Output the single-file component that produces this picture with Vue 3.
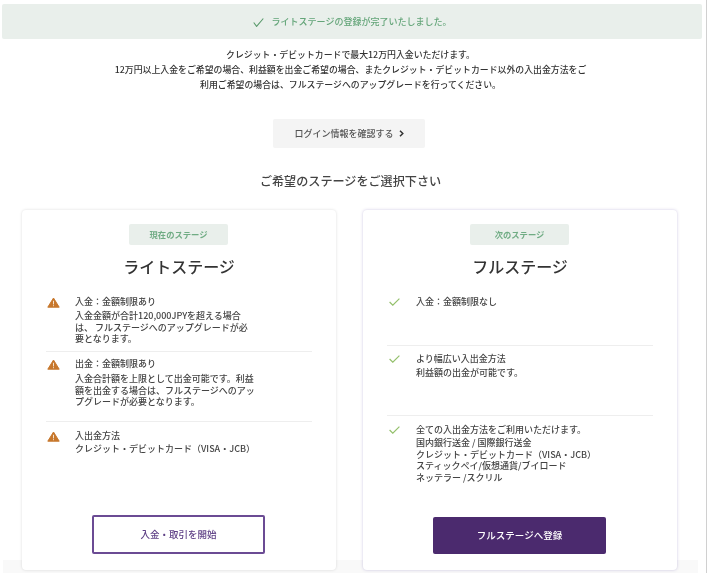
<script setup>
const lite = [
  { head: '入金：金額制限あり', lines: ['入金金額が合計120,000JPYを超える場合', 'は、 フルステージへのアップグレードが必', '要となります。'], h: 56, pad: 0, gap: 2 },
  { head: '出金：金額制限あり', lines: ['入金合計額を上限として出金可能です。利益', '額を出金する場合は、フルステージへのアッ', 'プグレードが必要となります。'], h: 70, pad: 6, gap: 3 },
  { head: '入出金方法', lines: ['クレジット・デビットカード（VISA・JCB）'], h: 60, pad: 8, gap: 1 },
]
const full = [
  { head: '入金：金額制限なし', lines: [], h: 50, pad: 0, gap: 2 },
  { head: 'より幅広い入出金方法', lines: ['利益額の出金が可能です。'], h: 70, pad: 7, gap: 2 },
  { head: '全ての入出金方法をご利用いただけます。', lines: ['国内銀行送金 / 国際銀行送金', 'クレジット・デビットカード（VISA・JCB）', 'スティックペイ/仮想通貨/ブイロード', 'ネッテラー /スクリル'], h: 70, pad: 8, gap: 1 },
]
</script>

<template>
  <div class="page">
    <div class="banner">
      <svg class="banner-check" width="11" height="9" viewBox="0 0 11 9"><path d="M0.7 4.5 L3.6 8.4 L10.3 0.5" fill="none" stroke="#5a9a6c" stroke-width="1.1" /></svg>
      <span>ライトステージの登録が完了いたしました。</span>
    </div>

    <div class="intro">
      <p>クレジット・デビットカードで最大12万円入金いただけます。</p>
      <p>12万円以上入金をご希望の場合、利益額を出金ご希望の場合、またクレジット・デビットカード以外の入出金方法をご</p>
      <p>利用ご希望の場合は、フルステージへのアップグレードを行ってください。</p>
    </div>

    <button class="login-btn">
      ログイン情報を確認する
      <svg width="5" height="7" viewBox="0 0 5 7"><path d="M1 0.7 L3.8 3.5 L1 6.3" fill="none" stroke="#333" stroke-width="1.5" /></svg>
    </button>

    <h2 class="select-title">ご希望のステージをご選択下さい</h2>

    <div class="cards">
      <section class="card">
        <div class="badge">現在のステージ</div>
        <h3>ライトステージ</h3>
        <div class="items">
          <div v-for="item in lite" :key="item.head" class="item" :style="{ height: item.h + 'px', paddingTop: item.pad + 'px' }">
            <div class="icon-box">
              <svg class="warn" width="13" height="11" viewBox="0 0 13 11">
                <path d="M6.5 1 L12.2 10.2 L0.8 10.2 Z" fill="#c7772c" stroke="#c7772c" stroke-width="1" stroke-linejoin="round" />
                <rect x="6" y="3.8" width="1" height="3.6" fill="#f5e2cc" />
                <rect x="6" y="8.2" width="1" height="1" fill="#f5e2cc" />
              </svg>
            </div>
            <div class="item-text">
              <p class="item-head" :style="{ marginBottom: item.gap + 'px' }">{{ item.head }}</p>
              <p v-for="line in item.lines" :key="line">{{ line }}</p>
            </div>
          </div>
        </div>
        <button class="action outline">入金・取引を開始</button>
      </section>

      <section class="card next">
        <div class="badge">次のステージ</div>
        <h3>フルステージ</h3>
        <div class="items">
          <div v-for="item in full" :key="item.head" class="item" :style="{ height: item.h + 'px', paddingTop: item.pad + 'px' }">
            <div class="icon-box">
              <svg class="check" width="11" height="8" viewBox="0 0 11 8">
                <path d="M0.6 4 L3.8 7.2 L10.4 0.6" fill="none" stroke="#94c06c" stroke-width="1.2" />
              </svg>
            </div>
            <div class="item-text">
              <p class="item-head" :style="{ marginBottom: item.gap + 'px' }">{{ item.head }}</p>
              <p v-for="line in item.lines" :key="line">{{ line }}</p>
            </div>
          </div>
        </div>
        <button class="action solid">フルステージへ登録</button>
      </section>
    </div>
  </div>
</template>

<style>
body {
  background: #fff;
}
</style>

<style scoped>
.page {
  box-sizing: border-box;
  width: 707px;
  height: 573px;
  overflow: hidden;
  padding: 4px 4px 0 2px;
  border-right: 1px solid #d0d0d0;
  background: linear-gradient(#f9f9f9, #f9f9f9) 3px 560px / 695px 13px no-repeat #fff;
  font-family: "Noto Sans CJK JP", "Noto Sans", sans-serif;
  color: #333;
  text-align: center;
  filter: blur(0.45px);
}

p {
  margin: 0;
}

.banner {
  height: 35px;
  display: flex;
  align-items: center;
  justify-content: center;
  gap: 8px;
  background: #e9efeb;
  border-radius: 2px;
  color: #64a579;
  font-size: 9px;
  font-weight: 500;
}

.banner-check {
  margin-top: 2px;
}

.intro {
  margin-top: 8px;
  padding-right: 3px;
  font-size: 8.9px;
  line-height: 15px;
  font-weight: 500;
}

.login-btn {
  display: flex;
  align-items: center;
  justify-content: center;
  gap: 5px;
  width: 152px;
  height: 29px;
  margin: 27px 0 0 271px;
  border: none;
  border-radius: 2px;
  background: #f4f4f4;
  color: #555;
  font: 500 9px "Noto Sans CJK JP", sans-serif;
}

.select-title {
  margin: 24px 0 0;
  padding-right: 3px;
  font-size: 12.1px;
  line-height: 18px;
  font-weight: 500;
  color: #444;
}

.cards {
  display: flex;
  gap: 27px;
  margin: 20px 0 0 20px;
}

.card {
  box-sizing: border-box;
  width: 314px;
  height: 360px;
  padding: 14px 24px 0;
  background: #fff;
  border-radius: 4px;
  box-shadow: 0 0 3px rgba(0, 0, 0, 0.14);
  display: flex;
  flex-direction: column;
  align-items: center;
}

.card.next {
  box-shadow: 0 0 3px rgba(90, 70, 160, 0.3);
}

.badge {
  width: 99px;
  height: 21px;
  margin-right: 1px;
  line-height: 21px;
  background: #e9efeb;
  border-radius: 2px;
  color: #70ac84;
  font-size: 8.3px;
  font-weight: 700;
}

h3 {
  margin: 9px 0 0;
  font-size: 16px;
  line-height: 24px;
  font-weight: 500;
  color: #333;
}

.items {
  width: 266px;
  margin-top: 18px;
}

.item {
  box-sizing: border-box;
  display: flex;
  gap: 15px;
  text-align: left;
  border-bottom: 1px solid #eee;
  font-size: 9px;
  line-height: 11.5px;
  font-weight: 500;
  color: #444;
}

.item:last-child {
  border-bottom: none;
}

.icon-box {
  flex: none;
  width: 14px;
  display: flex;
  justify-content: flex-end;
}

.warn {
  margin-top: 1px;
}

.check {
  margin: 2px 1px 0 0;
}

.item-head {
  line-height: 12px;
}

.action {
  width: 173px;
  margin-top: auto;
  margin-right: 1px;
  margin-bottom: 16px;
  padding-bottom: 3px;
  border-radius: 2px;
  font: 500 9.5px "Noto Sans CJK JP", sans-serif;
}

.outline {
  height: 39px;
  background: #fff;
  border: 2px solid #6b4b94;
  color: #5d3f85;
}

.solid {
  height: 37px;
  background: #4b2a6e;
  border: none;
  color: #fff;
}
</style>
